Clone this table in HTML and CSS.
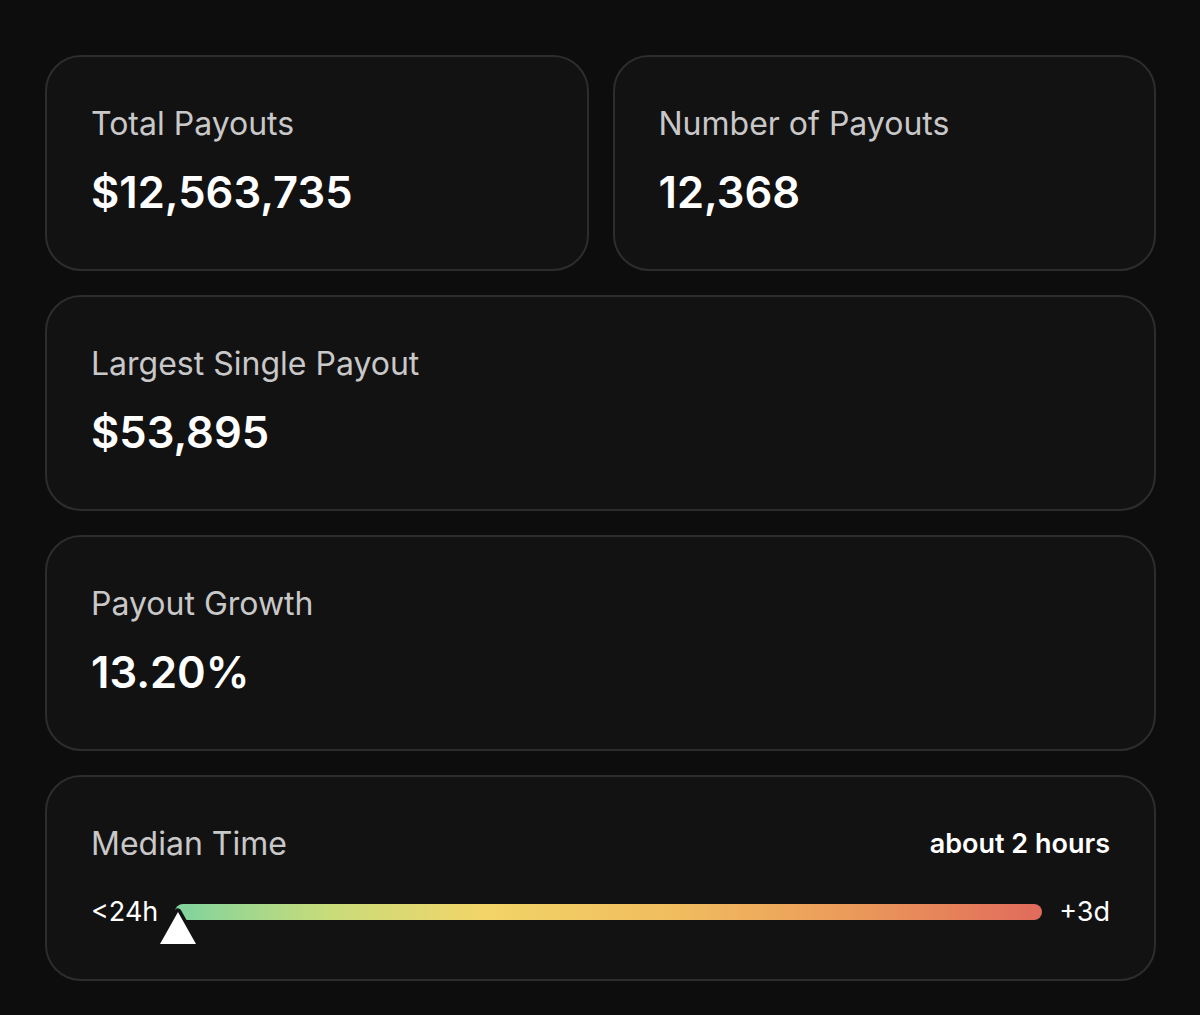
FILE: index.html
```html
<!DOCTYPE html>
<html lang="en">
<head>
<meta charset="utf-8">
<title>Payout Stats</title>
<link rel="stylesheet" href="styles.css">
</head>
<body>
<main class="grid">
  <section class="card">
    <div class="label">Total Payouts</div>
    <div class="value">$12,563,735</div>
  </section>
  <section class="card">
    <div class="label">Number of Payouts</div>
    <div class="value">12,368</div>
  </section>
  <section class="card wide">
    <div class="label">Largest Single Payout</div>
    <div class="value">$53,895</div>
  </section>
  <section class="card wide">
    <div class="label">Payout Growth</div>
    <div class="value">13.20%</div>
  </section>
  <section class="card wide median">
    <div class="head">
      <div class="label">Median Time</div>
      <div class="summary">about 2 hours</div>
    </div>
    <div class="scale">
      <span class="end">&lt;24h</span>
      <div class="track">
        <svg class="marker" width="48" height="46" viewBox="0 0 48 46" aria-hidden="true">
          <path d="M24 6 L42 38 L6 38 Z" fill="#ffffff" stroke="#131213" stroke-width="7" stroke-linejoin="round" paint-order="stroke"/>
        </svg>
      </div>
      <span class="end">+3d</span>
    </div>
  </section>
</main>
</body>
</html>
```

FILE: styles.css
```css
html, body {
  margin: 0;
  padding: 0;
  background: #0e0d0e;
}
body {
  font-family: Inter, "Noto Sans", "Liberation Sans", sans-serif;
  color: #ffffff;
}
.grid {
  display: grid;
  grid-template-columns: 1fr 1fr;
  gap: 24px;
  padding: 55px 44px 0 45px;
}
.card {
  box-sizing: border-box;
  height: 216px;
  background: #131213;
  border: 2px solid #2e2c2e;
  border-radius: 36px;
  padding: 48px 44px 0 44px;
}
.wide {
  grid-column: 1 / span 2;
}
.median {
  height: 206px;
}
.label {
  font-size: 32px;
  line-height: 38px;
  color: #c9c8c9;
  font-weight: 400;
}
.value {
  margin-top: 23px;
  font-size: 43.5px;
  line-height: 52px;
  font-weight: 600;
  color: #ffffff;
}
.head {
  display: flex;
  justify-content: space-between;
  align-items: center;
}
.summary {
  font-size: 27px;
  font-weight: 600;
  line-height: 38px;
  color: #ffffff;
}
.scale {
  display: flex;
  align-items: center;
  gap: 17px;
  margin-top: 33px;
}
.end {
  font-size: 27px;
  line-height: 32px;
  color: #ffffff;
}
.track {
  position: relative;
  flex: 1;
  height: 16px;
  border-radius: 8px;
  background: linear-gradient(90deg, #7fd39e 0%, #c9dc7a 18%, #f2d468 36%, #f0bc5e 58%, #eb9a5a 78%, #e06b5b 100%);
}
.marker {
  position: absolute;
  left: -21px;
  top: 2px;
}
```
